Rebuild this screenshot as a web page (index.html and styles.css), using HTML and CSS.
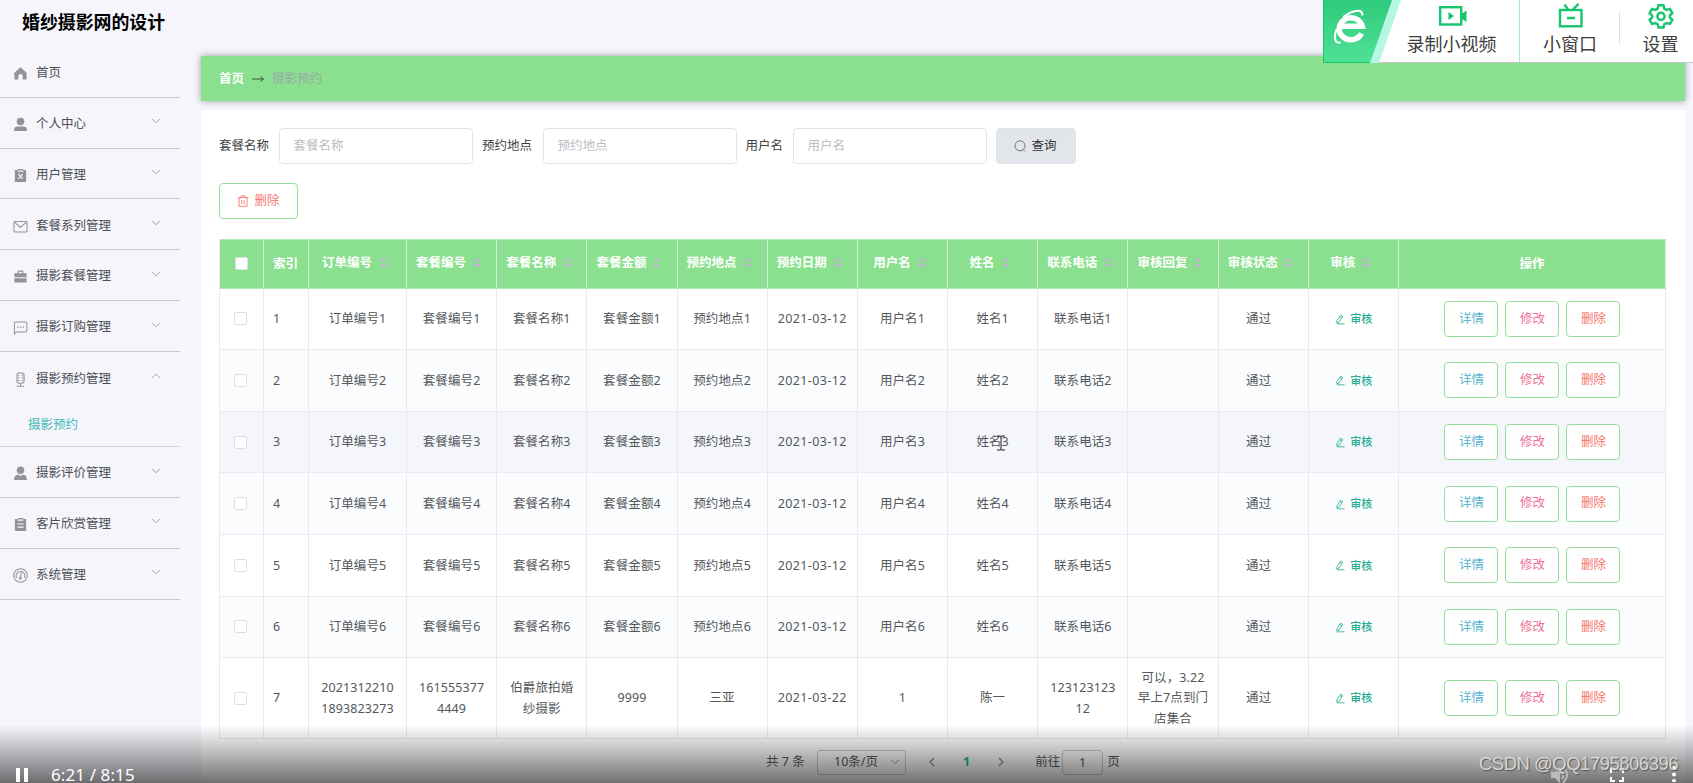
FILE: index.html
```html
<!DOCTYPE html>
<html lang="zh-CN">
<head>
<meta charset="utf-8">
<title>婚纱摄影网的设计</title>
<link rel="stylesheet" href="styles.css">
</head>
<body>
<svg class="defs" width="0" height="0">
  <symbol id="down" viewBox="0 0 10 10"><path d="M1 2.8 5 6.8 9 2.8" fill="none" stroke="currentColor"/></symbol>
  <symbol id="up" viewBox="0 0 10 10"><path d="M1 7 5 3 9 7" fill="none" stroke="currentColor"/></symbol>
  <symbol id="edit" viewBox="0 0 12 12"><path d="M2.2 7.2 6.2 1.3 8.4 2.7 4.4 8.8 2 9.8ZM5.4 2.8 7.4 4.2M2 10.7H10.5" fill="none" stroke="currentColor" stroke-width=".9"/></symbol>
</svg>
<header class="header"><h1 class="title">婚纱摄影网的设计</h1></header>
<div class="layout">
  <nav class="sidebar">
    <div class="item"><svg class="ico" viewBox="0 0 16 16"><path d="M8 1.300 14.500 7.300V14.500H10.300V10.800a2.300 2.300 0 0 0-4.600 0V14.500H1.500V7.300Z"/></svg><span>首页</span></div>
    <div class="item"><svg class="ico" viewBox="0 0 16 16"><circle cx="8" cy="4.800" r="4"/><path d="M1.300 15V13Q1.300 10 5 10H11Q14.700 10 14.700 13V15Z"/></svg><span>个人中心</span><svg class="chev"><use href="#down"/></svg></div>
    <div class="item"><svg class="ico" viewBox="0 0 16 16"><path d="M2 2H5V1H11V2H14V15H2Z"/><path class="cut" d="M5 3.3H11M5.6 6.3 10.4 11.7M10.4 6.3 5.6 11.7"/></svg><span>用户管理</span><svg class="chev"><use href="#down"/></svg></div>
    <div class="item"><svg class="ico line" viewBox="0 0 16 16"><rect x="1" y="2.6" width="14" height="11.300" rx="1"/><path d="M2 3.5 8 9 14 3.5"/></svg><span>套餐系列管理</span><svg class="chev"><use href="#down"/></svg></div>
    <div class="item"><svg class="ico" viewBox="0 0 16 16"><path d="M1.500 4.5H5V1.500H11V4.5H14.500V8.7H1.500ZM6.2 3V4.5H9.8V3ZM1.500 9.8H14.500V14.500H1.500Z" fill-rule="evenodd"/></svg><span>摄影套餐管理</span><svg class="chev"><use href="#down"/></svg></div>
    <div class="item"><svg class="ico line" viewBox="0 0 16 16"><path d="M1.500 14.8V3.5Q1.5 2.2 2.5 2.2H13.5Q14.8 2.2 14.8 3.5V11.5Q14.8 12.8 13.5 12.8H3.5Z"/><path d="M4.5 7.5h1.4M7.3 7.5h1.4M10.1 7.5h1.4" stroke-width="1.4"/></svg><span>摄影订购管理</span><svg class="chev"><use href="#down"/></svg></div>
    <div class="item"><svg class="ico line" viewBox="0 0 16 16"><rect x="4.2" y="1" width="7.6" height="11" rx="2.4"/><path d="M5 4H6.8M5 6.5H6.8M5 9H6.8M9.2 4H11M9.2 6.5H11M9.2 9H11M8 12V15M4 15.2H12"/></svg><span>摄影预约管理</span><svg class="chev"><use href="#up"/></svg></div>
    <div class="sub">摄影预约</div>
    <div class="item"><svg class="ico" viewBox="0 0 16 16"><circle cx="8" cy="4.6" r="4"/><path d="M1 15 2 11Q2.500 9.500 6 9L8 11 10 9Q13.500 9.500 14 11L15 15Z"/></svg><span>摄影评价管理</span><svg class="chev"><use href="#down"/></svg></div>
    <div class="item"><svg class="ico" viewBox="0 0 16 16"><path d="M2 2H5V1H11V2H14V15H2Z"/><path class="cut" d="M5 3.3H11M4.7 7.5H11.3M4.7 10.8H11.3"/></svg><span>客片欣赏管理</span><svg class="chev"><use href="#down"/></svg></div>
    <div class="item"><svg class="ico line" viewBox="0 0 16 16"><circle cx="8" cy="8" r="7.2"/><path d="M3.800 10.8A4.8 4.8 0 1 1 12.200 10.8M9 5 8 10"/><circle cx="7.8" cy="11" r="1.1"/></svg><span>系统管理</span><svg class="chev"><use href="#down"/></svg></div>
  </nav>
  <main class="main">
    <div class="crumbs"><b>首页</b><svg class="arrow" viewBox="0 0 14 8"><path d="M1 4H12.5M9.5 1.5 12.5 4 9.5 6.5"/></svg><span>摄影预约</span></div>
    <section class="panel">
      <div class="search">
        <label class="lab1">套餐名称</label><div class="input">套餐名称</div>
        <label class="lab2">预约地点</label><div class="input">预约地点</div>
        <label class="lab3">用户名</label><div class="input">用户名</div>
        <button class="query"><svg viewBox="0 0 12 12"><circle cx="6" cy="5.8" r="5"/><path d="M9.2 9.4 11 11.3"/></svg>查询</button>
      </div>
      <button class="remove"><svg viewBox="0 0 12 12"><path d="M.8 2.6H11.2M4 2.4V.9H8V2.4M2 2.8V11.3H10V2.8M4.8 5V9.2M7.2 5V9.2"/></svg>删除</button>
      <div class="table" id="table"></div>
      <div class="pager"><span class="total">共 7 条</span><div class="size"><span>10条/页</span><svg><use href="#down"/></svg></div><svg class="prev" viewBox="0 0 10 10"><path d="M7 1 3 5 7 9"/></svg><b>1</b><svg class="next" viewBox="0 0 10 10"><path d="M3 1 7 5 3 9"/></svg><span class="goto">前往</span><div class="page">1</div><span>页</span></div>
    </section>
  </main>
</div>

<div class="recorder">
  <svg class="brand" viewBox="0 0 78 63">
    <defs><linearGradient id="g" x1="0" y1="0" x2="0" y2="1"><stop offset="0" stop-color="#2fca7c"/><stop offset="1" stop-color="#4fe296"/></linearGradient></defs>
    <path d="M0 0H78L56 63H0Z" fill="#b5f7e2"/><path d="M0 0H69L47 63H0Z" fill="url(#g)"/><path d="M.5 0V62.5H46" fill="none" stroke="#17c56b"/>
    <path d="M38.500 33.500A11.700 11 0 1 1 39.300 26.300H17.500" fill="none" stroke="#fff" stroke-width="5.500"/>
    <path d="M20 17Q31 9.500 37 11Q39.500 12 39.500 15.500M13.500 29Q10.500 39 13.500 42Q15 43 17.500 42.500" fill="none" stroke="#fff" stroke-width="2"/>
  </svg>
  <div class="tool rec"><svg viewBox="0 0 28 20"><rect x="1.200" y="1.200" width="21" height="17.300"/><path class="fill" d="M9.500 6 15 10 9.500 14ZM23 7.500 27.500 4.500V16L23 13Z"/></svg><span>录制小视频</span></div>
  <div class="tool win"><svg viewBox="0 0 26 25"><rect x="2" y="7" width="21.500" height="16.300"/><path d="M6.500 1.500 10 6.500M20.500 .8 15 6.500M9 15H17"/></svg><span>小窗口</span></div>
  <div class="tool set"><svg viewBox="0 0 26 26"><path d="M10.500 2.200H15.500L16.300 5.600 18.600 6.900 22 5.900 24.400 10.200 21.800 12.500V14.500L24.400 16.800 22 20.900 18.600 20 16.300 21.300 15.500 24.500H10.500L9.700 21.300 7.400 20 4 20.900 1.600 16.800 4.200 14.500V12.500L1.600 10.200 4 5.900 7.400 6.900 9.700 5.600Z"/><circle cx="13" cy="13.400" r="3.600"/></svg><span>设置</span></div>
</div>

<svg class="cursor" viewBox="0 0 10 16"><path d="M1 1H4Q5 1 5 2Q5 1 6 1H9M5 2V14M1 15H4Q5 15 5 14Q5 15 6 15H9"/></svg>

<div class="player">
  <svg class="pause" viewBox="0 0 12 14"><path d="M0 0H4V14H0ZM8 0H12V14H8Z"/></svg><span class="time">6:21 / 8:15</span>
  <svg class="vol" viewBox="0 0 18 18"><path d="M0 6H4L9 1V17L4 12H0Z"/><path d="M11 5Q14 9 11 13M12 1.500Q20 9 12 16.500" fill="none" stroke="#bbb" stroke-width="2"/></svg>
  <svg class="full" viewBox="0 0 14 14"><path d="M1 5V1H5M9 1H13V5M13 9V13H9M5 13H1V9"/></svg>
  <svg class="more" viewBox="0 0 4 16"><circle cx="2" cy="2" r="2"/><circle cx="2" cy="8.500" r="2"/><circle cx="2" cy="15" r="2"/></svg>
</div>
<div class="watermark">CSDN @QQ1795806396</div>
<script src="app.js"></script>
</body>
</html>
```
FILE: styles.css
```css
* { box-sizing: border-box; }
html, body { height: 100%; }
body {
  margin: 0; position: relative; overflow: hidden; background: #f5f6fb; color: #55575b;
  font: 12.5px/20px "Noto Sans", "Noto Sans CJK SC", sans-serif;
}
.defs { position: absolute; }
svg { display: block; flex: none; }
button { font: inherit; padding: 0; }
.header { height: 46.5px; background: #f5f5fb; padding: 9px 22px 0; }
.title { margin: 0; font-size: 17.9px; line-height: 26px; font-weight: 700; color: #000; }
.layout { display: flex; height: 736.5px; }
.sidebar { width: 180px; background: #f5f5fb; flex: none; padding-top: .4px; }
.item { height: 50.85px; display: flex; align-items: center; padding: 2.400px 19px 0 13px; border-bottom: 1px solid #c9c9d0; color: #4c4f55; }
.ico { width: 15px; height: 15px; margin-right: 8px; fill: #909399; margin-top: 1px; }
.line { fill: none; stroke: #909399; stroke-width: 1.1; }
.cut { fill: none; stroke: #f5f5fb; stroke-width: 1.2; }
.chev { width: 10px; height: 10px; margin: -5px 0 0 auto; color: #a2a5ab; }
.item:nth-child(7) { border-bottom: 0; }
.sub { height: 44.2px; padding: 12px 0 0 28px; border-bottom: 1px solid #d5d5dc; color: #3fb9b9; }
.main { flex: 1; padding: 9.5px 8.500px 0 21px; min-width: 0; }
.crumbs { height: 45px; background: #8be08f; box-shadow: 0 0 7px rgba(0,0,0,.38); display: flex; align-items: center; padding-left: 18px; color: #9aa9a9; }
.crumbs b { color: #fff; }
.arrow { width: 14px; height: 8px; margin: 0 7px 0 7px; fill: none; stroke: #39543b; }
.panel { margin-top: 9px; height: 680px; background: #fff; padding: 18px 18.500px 0 18px; }
.search { display: flex; height: 36px; align-items: center; color: #3d3f43; }
.input { width: 194px; height: 36px; border: 1px solid #e2e3ec; border-radius: 4px; padding: 7px 0 0 13.500px; color: #b9bcc4; flex: none; }
.lab1 { width: 60px; }
.lab2 { width: 70px; padding-left: 9px; }
.lab3 { width: 56px; padding-left: 8.500px; }
.query { margin-left: 8.500px; width: 80px; height: 36px; border: 1px solid #dfe2e9; border-radius: 4px; background: #e2e5ea; display: flex; align-items: center; justify-content: center; gap: 5px; color: #34363a; }
.query svg, .remove svg { width: 12px; height: 12px; fill: none; stroke: currentColor; stroke-width: .9; }
.query svg { color: #66686c; }
.remove { margin-top: 19px; width: 79px; height: 36px; border: 1px solid #96df9a; border-radius: 4px; background: #fff; color: #f5776c; display: flex; align-items: center; justify-content: center; gap: 5px; }
.table { margin-top: 20px; border-left: 1px solid #e8eaf3; border-top: 1px solid #aeeab1; }
.row { display: grid; grid-template-columns: 44px 45px 98px repeat(11, 90.180px) 1fr; height: 61.630px; }
.row > div { display: flex; align-items: center; justify-content: center; text-align: center; border-right: 1px solid #e8eaf3; border-bottom: 1px solid #e8eaf3; padding: 1px 8px 0; letter-spacing: .1px; line-height: 20.500px; white-space: nowrap; }
.row > div:nth-child(8) { letter-spacing: .4px; padding-left: 7px; padding-right: 7px; }
.row > div:nth-child(13) { padding-right: 17px; }
.row.head { height: 48.500px; background: #8be08f; color: #fff; font-weight: 700; }
.row.head > div, .row.head > div:nth-child(n+3) { border-right-color: #d3f3d9; border-bottom-color: #aee9b4; letter-spacing: 0; padding: 0 8px 2px 2px; }
.row > .num { justify-content: flex-start; padding-left: 9px; }
.row.head > .num { padding: 0 0 0 9px; }
.row.head > div:last-child { padding: 0; }
.row.even { background: #fafcfe; }
.row.hover { background: #f4f6fb; }
.row.last { height: 80.700px; }
.box { width: 13px; height: 13px; border: 1px solid #dcdfe6; border-radius: 2px; background: #fff; margin: -1px 3px 0 0; flex: none; }
.head .box { margin: 2px 0 0 6px; }
.sort { width: 8px; height: 12px; margin: 0 0 0 7px; fill: #b9b9c6; }
.audit { display: flex; align-items: center; gap: 4px; font-size: 11px; font-weight: 500; color: #28ab91; padding-left: 1px; }
.audit svg { width: 11px; height: 11px; }
.row > .ops { gap: 7px; letter-spacing: 0; padding: 0 8px 0 9px; }
.ops button { width: 54px; height: 36px; border: 1px solid #96df9a; border-radius: 4px; background: #fff; }
.detail { color: #58b5d0; } .modify { color: #ef7398; } .del { color: #f57468; }
.pager { display: flex; align-items: center; height: 26px; margin-top: 10.500px; padding-left: 547px; }
.total { width: 51px; }
.size { width: 89px; height: 25px; border: 1px solid #c8cad0; border-radius: 3px; display: flex; align-items: center; padding: 0 5px 0 16px; justify-content: space-between; }
.size svg { width: 10px; height: 10px; color: #a2a5ab; }
.prev, .next { width: 10px; height: 10px; fill: none; stroke: #8b8d92; stroke-width: 1.200; }
.prev { margin-left: 21px; }
.pager b { color: #1abc8b; margin: 0 26px 0 26px; }
.goto { margin-left: 29px; }
.page { width: 41px; height: 25px; border: 1px solid #c8cad0; border-radius: 4px; text-align: center; line-height: 23px; margin: 0 4px 0 2px; }

.recorder { position: absolute; top: 0; right: 0; width: 370px; height: 63px; background: #fff; border-bottom: 1px solid #c4c6c8; display: flex; color: #3e3e3e; font-size: 18px; line-height: 24px; }
.brand { width: 78px; height: 63px; }
.tool { display: flex; flex-direction: column; align-items: center; white-space: nowrap; position: relative; }
.tool svg { fill: none; stroke: #16c56e; stroke-width: 2.400; }
.tool .fill { fill: #16c56e; stroke: none; }
.rec { width: 119px; padding: 6px 17px 0 0; border-right: 1px solid #a9ecc9; }
.rec svg { width: 28px; height: 20px; margin: 0 0 6px 3px; }
.win { width: 100px; padding-top: 3px; }
.win svg { width: 26px; height: 25px; margin: 0 0 4px 2px; }
.win::after { content: ""; position: absolute; right: 0; top: 12px; height: 32px; width: 1px; background: #ddd; }
.set { width: 73px; padding: 3px 0 0 8px; }
.set svg { width: 26px; height: 26px; margin-bottom: 3px; }
.cursor { position: absolute; left: 996px; top: 435px; width: 10px; height: 16px; fill: none; stroke: #222; }
.player { position: absolute; left: 0; right: 0; bottom: 0; height: 58px; background: linear-gradient(rgba(0,0,0,0), rgba(0,0,0,.22) 40%, rgba(0,0,0,.56)); display: flex; align-items: flex-start; color: #fff; }
.pause { width: 12px; height: 14px; margin: 43px 23px 0 16px; fill: #fff; }
.time { font-size: 17px; line-height: 17px; height: 17px; margin-top: 41px; white-space: nowrap; letter-spacing: .1px; }
.vol { width: 18px; height: 18px; margin: 41px 0 0 auto; fill: #bbb; }
.full { width: 14px; height: 14px; margin: 43px 0 0 41px; fill: none; stroke: #fff; stroke-width: 2; }
.more { width: 4px; height: 16px; margin: 41px 17px 0 48px; fill: #fff; }
.watermark { position: absolute; left: 1479px; top: 752px; font: 18.500px/24px "Liberation Sans", sans-serif; letter-spacing: -.5px; color: rgba(225,225,225,.9); text-shadow: 1px 1px 1px #555; white-space: nowrap; }
```
FILE: app.js
```javascript
const heads = ['订单编号', '套餐编号', '套餐名称', '套餐金额', '预约地点', '预约日期', '用户名', '姓名', '联系电话', '审核回复', '审核状态', '审核'];
const sort = '<svg class="sort" viewBox="0 0 8 12"><path d="M0 5 4 1 8 5ZM0 7 4 11 8 7Z"/></svg>';
const audit = '<span class="audit"><svg><use href="#edit"/></svg>审核</span>';
const ops = '<div class="ops"><button class="detail">详情</button><button class="modify">修改</button><button class="del">删除</button></div>';
const box = '<div><span class="box"></span></div>';
const rows = [];
for (let i = 1; i <= 6; i++) {
  rows.push(['订单编号' + i, '套餐编号' + i, '套餐名称' + i, '套餐金额' + i, '预约地点' + i, '2021-03-12', '用户名' + i, '姓名' + i, '联系电话' + i, '', '通过', audit]);
}
rows.push(['2021312210<br>1893823273', '161555377<br>4449', '伯爵旅拍婚<br>纱摄影', '9999', '三亚', '2021-03-22', '1', '陈一', '123123123<br>12', '可以，3.22<br>早上7点到门<br>店集合', '通过', audit]);
let html = '<div class="row head">' + box + '<div class="num">索引</div>' + heads.map(h => `<div>${h}${sort}</div>`).join('') + '<div>操作</div></div>';
rows.forEach((r, i) => {
  const cls = i === 6 ? 'last' : i === 2 ? 'hover' : i % 2 ? 'even' : '';
  html += `<div class="row ${cls}">${box}<div class="num">${i + 1}</div>` + r.map(c => `<div><span>${c}</span></div>`).join('') + ops + '</div>';
});
document.getElementById('table').innerHTML = html;
```
